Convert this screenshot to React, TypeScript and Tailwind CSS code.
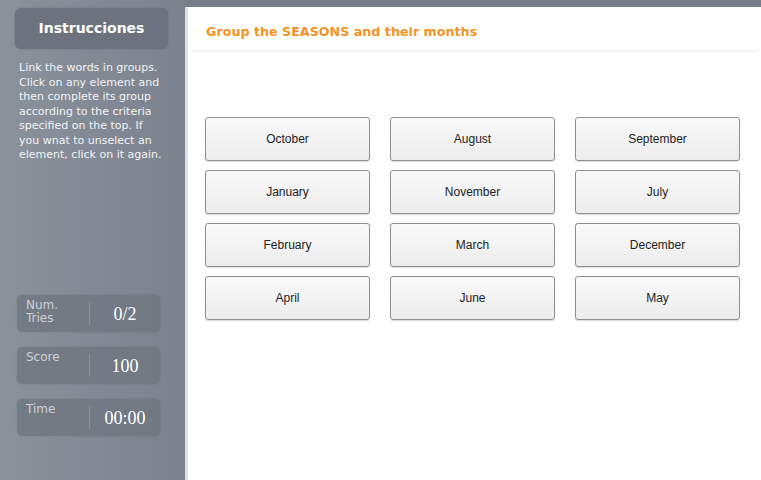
const months = [
  ["October", "August", "September"],
  ["January", "November", "July"],
  ["February", "March", "December"],
  ["April", "June", "May"],
];

const stats = [
  { label: "Num. Tries", value: "0/2" },
  { label: "Score", value: "100" },
  { label: "Time", value: "00:00" },
];

function StatBox({ label, value }: { label: string; value: string }) {
  return (
    <div className="flex h-[37px] w-[143px] items-center rounded-[5px] bg-[#6e7580]/80 shadow-[0_0_2px_rgba(0,0,0,0.15)]">
      <div className="w-[72px] self-start pl-[9px] pt-[4px] font-['DejaVu_Sans',sans-serif] text-[12px] leading-[13px] text-[#cdd1d7]">
        {label === "Num. Tries" ? (
          <>
            Num.
            <br />
            Tries
          </>
        ) : (
          label
        )}
      </div>
      <div className="h-[23px] w-px bg-[#8a919b]" />
      <div className="flex-1 pt-[3px] text-center font-['Liberation_Serif',serif] text-[18px] text-white">
        {value}
      </div>
    </div>
  );
}

export default function App() {
  return (
    <div className="flex h-[480px] w-[761px] overflow-hidden bg-[#787f8a]">
      {/* Sidebar */}
      <aside className="flex w-[185px] shrink-0 flex-col bg-gradient-to-r from-[#8a929c] to-[#7b828e] pl-[15px]">
        <div className="mt-[8px] flex h-[41px] w-[153px] items-center justify-center rounded-[6px] bg-[#6d737e] shadow-[0_0_2px_rgba(0,0,0,0.2)]">
          <span className="font-['DejaVu_Sans',sans-serif] text-[14px] font-bold text-white">
            Instrucciones
          </span>
        </div>
        <p className="mt-[12px] w-[150px] pl-[4px] font-['DejaVu_Sans',sans-serif] text-[11px] leading-[14.5px] text-[#f2f3f5]">
          Link the words in groups. Click on any element and then complete its group
          according to the criteria specified on the top. If you wnat to unselect an
          element, click on it again.
        </p>
        <div className="mt-[132px] flex flex-col gap-[15px] pl-[2px]">
          {stats.map((s) => (
            <StatBox key={s.label} label={s.label} value={s.value} />
          ))}
        </div>
      </aside>

      {/* Content */}
      <main className="mt-[7px] flex flex-1 border-l-[3px] border-[#dfe1e5] bg-white">
        <div className="flex flex-1 flex-col">
          <div className="h-[43px] pl-[18px] pt-[17px] shadow-[0_4px_5px_-4px_rgba(0,0,0,0.12)]">
            <h1 className="font-['DejaVu_Sans',sans-serif] text-[12.7px] font-bold leading-[16px] text-[#f39325]">
              Group the SEASONS and their months
            </h1>
          </div>
          <div className="mt-[67px] grid w-[552px] grid-cols-3 gap-x-[20px] gap-y-[9px] pl-[17px]">
            {months.flat().map((m) => (
              <button
                key={m}
                className="flex h-[44px] items-center justify-center rounded-[3px] border border-[#8f8f8f] bg-gradient-to-b from-[#fafafa] to-[#ececec] font-['Liberation_Sans',sans-serif] text-[12px] text-[#222] shadow-[0_1px_1px_rgba(0,0,0,0.15)]"
              >
                {m}
              </button>
            ))}
          </div>
        </div>
      </main>
    </div>
  );
}
